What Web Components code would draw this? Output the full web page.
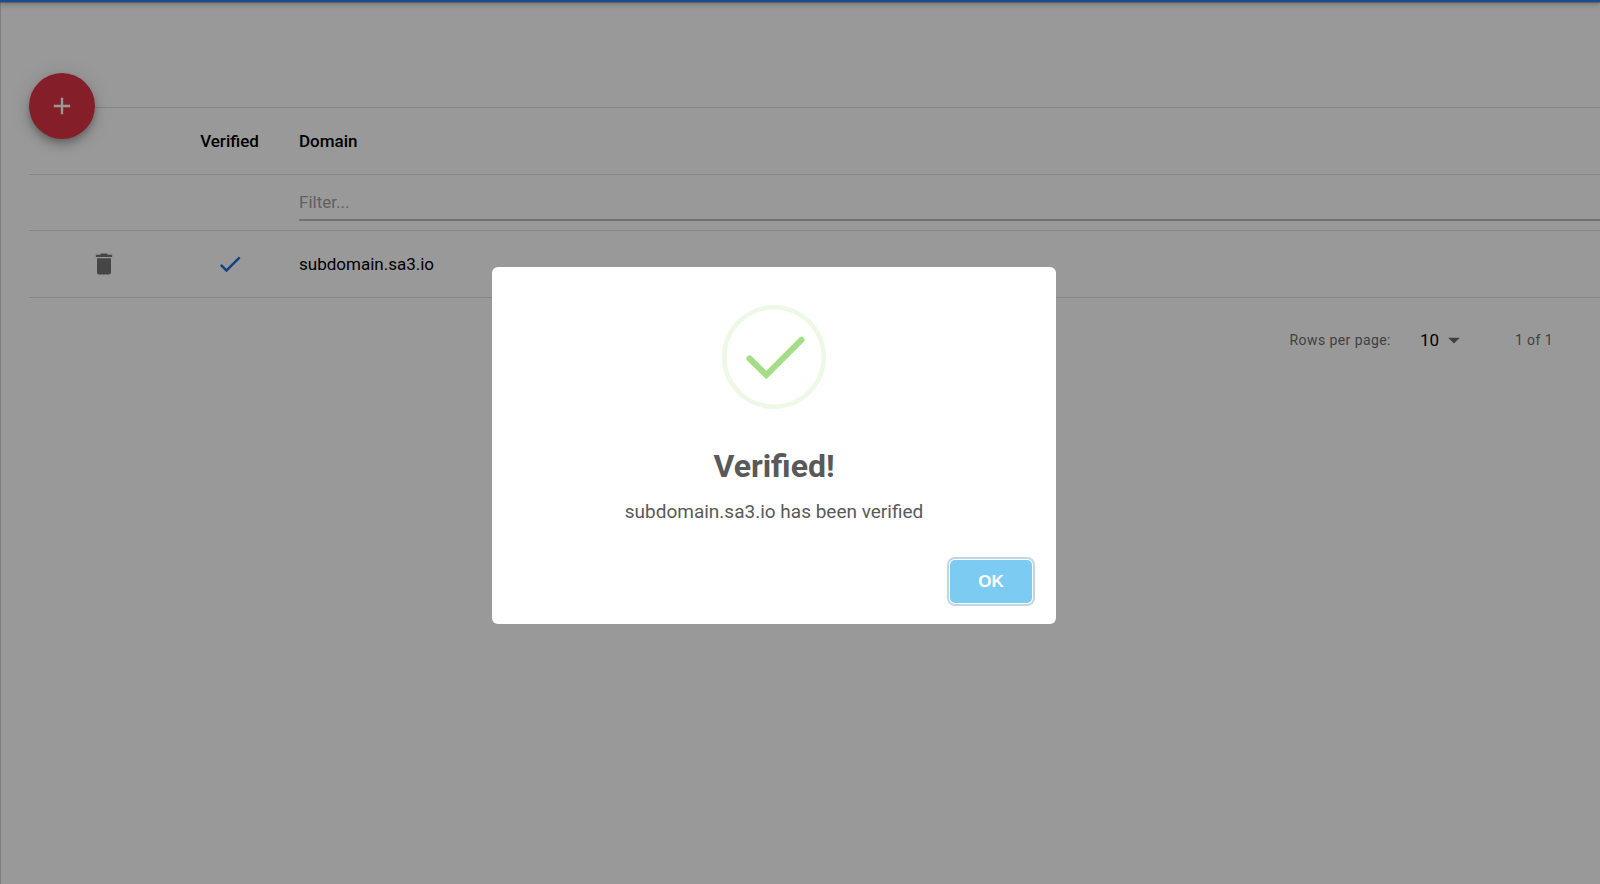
<!DOCTYPE html>
<html lang="en">
<head>
<meta charset="utf-8">
<title>Domains</title>
<style>
  body {
    margin: 0;
    min-height: 100vh;
    overflow: hidden;
    background: #fff;
    font-family: Roboto, "Liberation Sans", sans-serif;
    font-size: 17px;
    color: #000;
  }
</style>
</head>
<body>
<domains-page></domains-page>
<alert-modal heading="Verified!">subdomain.sa3.io has been verified</alert-modal>

<script>
class MdIcon extends HTMLElement {
  connectedCallback() {
    const paths = {
      add: "M19 13h-6v6h-2v-6H5v-2h6V5h2v6h6v2z",
      delete: "M6 19c0 1.1.9 2 2 2h8c1.1 0 2-.9 2-2V7H6v12zM19 4h-3.5l-1-1h-5l-1 1H5v2h14V4z",
      check: "M9 16.17L4.83 12l-1.42 1.41L9 19 21 7l-1.41-1.41z",
      drop: "M7 10l5 5 5-5z"
    };
    this.attachShadow({ mode: "open" }).innerHTML = `
      <style>
        :host { display: inline-flex; width: 28px; height: 28px; }
        svg { width: 100%; height: 100%; fill: currentColor; }
      </style>
      <svg viewBox="0 0 24 24" aria-hidden="true"><path d="${paths[this.getAttribute("name")]}"/></svg>
    `;
  }
}
customElements.define("md-icon", MdIcon);

class FabButton extends HTMLElement {
  connectedCallback() {
    this.attachShadow({ mode: "open" }).innerHTML = `
      <style>
        :host { display: block; width: 66px; height: 66px; }
        button {
          display: flex;
          align-items: center;
          justify-content: center;
          width: 100%;
          height: 100%;
          padding: 0;
          border: 0;
          border-radius: 50%;
          background: #dc3545;
          color: #fff;
          box-shadow: 0 4px 6px -1px rgba(0,0,0,.2), 0 7px 12px rgba(0,0,0,.14), 0 1px 21px rgba(0,0,0,.12);
        }
      </style>
      <button type="button" aria-label="${this.getAttribute("label")}"><slot></slot></button>
    `;
  }
}
customElements.define("fab-button", FabButton);

class DomainTable extends HTMLElement {
  connectedCallback() {
    this.attachShadow({ mode: "open" }).innerHTML = `
      <style>
        :host { display: block; }
        table {
          width: 100%;
          border-collapse: separate;
          border-spacing: 0;
          table-layout: fixed;
          border-bottom: 1px solid #dedede;
        }
        .actions { width: 150px; }
        .verified { width: 101px; }
        th, td {
          box-sizing: border-box;
          height: 67px;
          padding: 0;
          border-top: 1px solid #dedede;
          font-weight: 400;
          text-align: center;
          vertical-align: middle;
        }
        th { font-weight: 500; }
        .filters td { height: 56px; vertical-align: top; }
        th:last-child, td:last-child { padding-left: 19px; text-align: left; }
        input {
          display: block;
          box-sizing: border-box;
          width: 100%;
          height: 46px;
          padding: 9px 0 0;
          border: 0;
          border-bottom: 2px solid #bcbcbc;
          border-radius: 0;
          background: none;
          font: inherit;
          outline: 0;
        }
        input::placeholder { color: #a0a0a0; opacity: 1; }
        .icon-btn {
          display: inline-flex;
          padding: 0;
          border: 0;
          background: none;
          color: #757575;
          vertical-align: middle;
        }
        .check { color: #1c6fdf; vertical-align: middle; }
      </style>
      <table>
        <colgroup><col class="actions"><col class="verified"><col></colgroup>
        <thead>
          <tr><th></th><th scope="col">Verified</th><th scope="col">Domain</th></tr>
        </thead>
        <tbody>
          <tr class="filters">
            <td></td>
            <td></td>
            <td><input type="text" placeholder="Filter..." aria-label="Filter domains"></td>
          </tr>
          <tr>
            <td><button class="icon-btn" type="button" aria-label="Delete"><md-icon name="delete"></md-icon></button></td>
            <td><md-icon class="check" name="check"></md-icon></td>
            <td>subdomain.sa3.io</td>
          </tr>
        </tbody>
      </table>
    `;
  }
}
customElements.define("domain-table", DomainTable);

class TablePager extends HTMLElement {
  connectedCallback() {
    this.attachShadow({ mode: "open" }).innerHTML = `
      <style>
        :host {
          display: flex;
          align-items: center;
          justify-content: flex-end;
          height: 84px;
          padding-right: 47px;
          font-size: 14px;
          letter-spacing: .03em;
          color: #6c6c6c;
        }
        .size { display: flex; align-items: center; margin: 0 51px 0 29px; }
        select {
          appearance: none;
          padding: 0;
          border: 0;
          background: none;
          font: inherit;
          font-size: 17px;
          letter-spacing: 0;
          color: #000;
        }
        md-icon { margin: 0 -4px 0 0; pointer-events: none; }
      </style>
      <label for="size">Rows per page:</label>
      <span class="size">
        <select id="size"><option>10</option></select>
        <md-icon name="drop"></md-icon>
      </span>
      <span>1 of 1</span>
    `;
  }
}
customElements.define("table-pager", TablePager);

class DomainsPage extends HTMLElement {
  connectedCallback() {
    this.attachShadow({ mode: "open" }).innerHTML = `
      <style>
        :host {
          display: block;
          box-sizing: border-box;
          min-height: 100vh;
          border-left: 1px solid #d4d4d4;
        }
        /* bottom edge of the app toolbar */
        header {
          height: 2px;
          margin-left: -1px;
          background: #2f7ff0;
          box-shadow: 0 1px 1px rgba(0,0,0,.3), 0 2px 5px rgba(0,0,0,.4), 0 1px 12px rgba(0,0,0,.12);
        }
        main { padding: 71px 0 0 28px; }
        fab-button { position: relative; z-index: 1; }
        domain-table { margin-top: -32px; }
      </style>
      <header></header>
      <main>
        <fab-button label="Add domain"><md-icon name="add"></md-icon></fab-button>
        <domain-table></domain-table>
        <table-pager></table-pager>
      </main>
    `;
  }
}
customElements.define("domains-page", DomainsPage);

class AlertModal extends HTMLElement {
  connectedCallback() {
    this.attachShadow({ mode: "open" }).innerHTML = `
      <style>
        :host {
          position: fixed;
          inset: 0;
          z-index: 10;
          display: flex;
          align-items: center;
          justify-content: center;
          box-sizing: border-box;
          padding: 7px 52px 0 0;
          background: rgba(0,0,0,.4);
        }
        .modal {
          width: 564px;
          border-radius: 6px;
          background: #fff;
          color: #595959;
          text-align: center;
        }
        .icon { display: block; width: 104px; height: 104px; margin: 0 auto; padding: 38px 0 0; }
        h2 { margin: 0; padding: 38px 18px 0; font-size: 32px; line-height: 38px; font-weight: 700; }
        p { margin: 0; padding: 16px 12px 0; font-size: 19px; line-height: 22px; }
        footer { display: flex; justify-content: flex-end; padding: 37px 24px 21px; }
        button {
          min-width: 82px;
          height: 43px;
          padding: 0 28px;
          border: 0;
          border-radius: 5px;
          background: #7bcbf2;
          color: #fff;
          font: bold 17px "Liberation Sans", Arial, sans-serif;
          box-shadow: 0 0 0 1px #fff, 0 0 0 3px rgba(43,114,165,.29);
        }
      </style>
      <div class="modal" role="dialog" aria-modal="true" aria-labelledby="title">
        <svg class="icon" viewBox="0 0 104 104" fill="none" aria-hidden="true">
          <circle cx="52" cy="52" r="49.7" stroke="#edf8e7" stroke-width="4.6"/>
          <path d="M27.5 53.5L44.3 70L79.5 34.8" stroke="#a5dc86" stroke-width="6" stroke-linecap="round"/>
        </svg>
        <h2 id="title">${this.getAttribute("heading")}</h2>
        <p><slot></slot></p>
        <footer><button type="button">OK</button></footer>
      </div>
    `;
  }
}
customElements.define("alert-modal", AlertModal);
</script>
</body>
</html>
